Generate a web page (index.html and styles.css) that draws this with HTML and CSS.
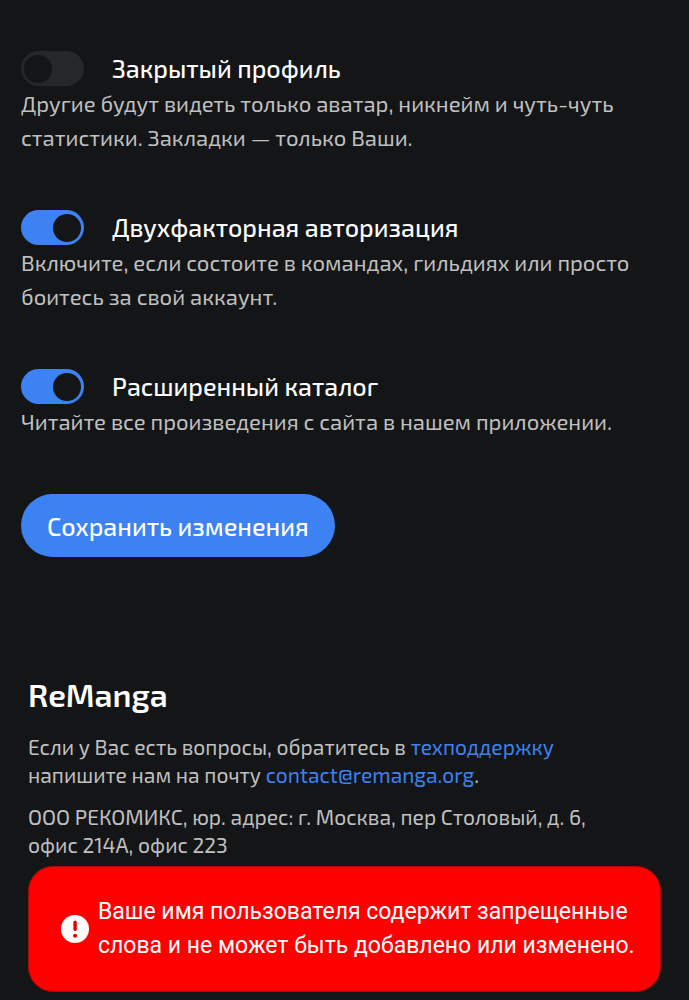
FILE: index.html
```html
<!DOCTYPE html>
<html lang="ru">
<head>
    <meta charset="UTF-8">
    <meta name="viewport" content="width=device-width, initial-scale=1.0">
    <title>ReManga</title>
    <link rel="stylesheet" href="styles.css">
</head>
<body>
    <main>
        <form class="settings">
            <div class="setting">
                <label class="setting-head">
                    <input type="checkbox" class="switch" aria-describedby="private-text">
                    <span>Закрытый профиль</span>
                </label>
                <p id="private-text">Другие будут видеть только аватар, никнейм и чуть-чуть<br>статистики. Закладки — только Ваши.</p>
            </div>
            <div class="setting">
                <label class="setting-head">
                    <input type="checkbox" class="switch" aria-describedby="twofactor-text" checked>
                    <span>Двухфакторная авторизация</span>
                </label>
                <p id="twofactor-text">Включите, если состоите в командах, гильдиях или просто<br>боитесь за свой аккаунт.</p>
            </div>
            <div class="setting">
                <label class="setting-head">
                    <input type="checkbox" class="switch" aria-describedby="catalog-text" checked>
                    <span>Расширенный каталог</span>
                </label>
                <p id="catalog-text">Читайте все произведения с сайта в нашем приложении.</p>
            </div>
            <button type="button" class="save">Сохранить изменения</button>
        </form>
    </main>

    <footer class="footer">
        <h2>ReManga</h2>
        <p>Если у Вас есть вопросы, обратитесь в <a href="#">техподдержку</a><br>напишите нам на почту <a href="mailto:contact@remanga.org">contact@remanga.org</a>.</p>
        <p>ООО РЕКОМИКС, юр. адрес: г. Москва, пер Столовый, д. 6,<br>офис 214А, офис 223</p>
    </footer>

    <div class="toast" role="alert">
        <svg class="toast-icon" viewBox="0 0 28 28" aria-hidden="true">
            <circle cx="14" cy="14" r="14" fill="#fff"/>
            <rect x="12.4" y="5.5" width="3.4" height="10.5" rx="1.7" fill="#e00000"/>
            <circle cx="14.1" cy="20.8" r="2" fill="#e00000"/>
        </svg>
        <span>Ваше имя пользователя содержит запрещенные слова и не может быть добавлено или изменено.</span>
    </div>
</body>
</html>
```

FILE: styles.css
```css
* {
    box-sizing: border-box;
}
body {
    margin: 0;
    background-color: #141517;
    color: #fff;
    font-family: "Exo 2", Roboto, sans-serif;
    font-size: 22px;
}
h2, p {
    margin: 0;
}
.settings {
    display: flex;
    flex-direction: column;
    align-items: flex-start;
    gap: 56px;
    padding: 51px 21px 0;
}
.setting-head {
    display: flex;
    align-items: center;
    gap: 28px;
    height: 35px;
    font-size: 25px;
    font-weight: 500;
    line-height: 35px;
    cursor: pointer;
}
.setting p {
    color: #c0c0c0;
    line-height: 34px;
}
.switch {
    appearance: none;
    display: flex;
    align-items: center;
    width: 63px;
    height: 35px;
    margin: 0;
    padding: 0 3px;
    border-radius: 18px;
    background-color: #26272b;
    cursor: pointer;
}
.switch::before {
    content: "";
    width: 28px;
    height: 28px;
    border-radius: 50%;
    background-color: #141517;
}
.switch:checked {
    justify-content: flex-end;
    background-color: #3d82f2;
}
.save {
    height: 63px;
    padding: 0 26px;
    border: none;
    border-radius: 32px;
    background-color: #3d82f2;
    color: #fff;
    font-family: inherit;
    font-size: 25px;
    font-weight: 500;
    cursor: pointer;
}
.footer {
    padding: 116px 28px 0;
    color: #c0c0c0;
    font-size: 21px;
    line-height: 28px;
}
.footer h2 {
    margin-bottom: 18px;
    color: #fff;
    font-size: 32px;
    font-weight: 600;
    line-height: 42px;
}
.footer p {
    margin-bottom: 14px;
}
.footer a {
    color: #3d82f2;
    text-decoration: none;
}
.toast {
    position: fixed;
    right: 28px;
    bottom: 8px;
    left: 28px;
    display: flex;
    align-items: center;
    gap: 9px;
    padding: 28px 20px 28px 32px;
    border: 1px solid #b00808;
    border-radius: 25px;
    background-color: #f00;
    color: #fff;
    font-family: Roboto, sans-serif;
    font-size: 23px;
    line-height: 34px;
}
.toast-icon {
    flex: none;
    width: 28px;
    height: 28px;
}
```
